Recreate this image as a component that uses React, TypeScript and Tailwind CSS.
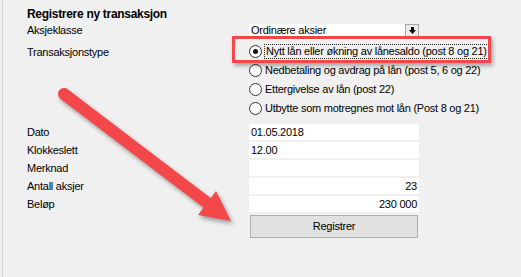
import React from 'react';

const fields = [
  { label: 'Dato', value: '01.05.2018', right: false },
  { label: 'Klokkeslett', value: '12.00', right: false },
  { label: 'Merknad', value: '', right: false },
  { label: 'Antall aksjer', value: '23', right: true },
  { label: 'Beløp', value: '230 000', right: true },
];

const options = [
  'Nytt lån eller økning av lånesaldo (post 8 og 21)',
  'Nedbetaling og avdrag på lån (post 5, 6 og 22)',
  'Ettergivelse av lån (post 22)',
  'Utbytte som motregnes mot lån (Post 8 og 21)',
];

const Radio: React.FC<{ checked?: boolean }> = ({ checked }) => (
  <span className="flex h-[13px] w-[13px] shrink-0 items-center justify-center rounded-full border border-[#333] bg-white">
    {checked && <span className="h-[5px] w-[5px] rounded-full bg-[#111]" />}
  </span>
);

const App: React.FC = () => {
  return (
    <div className="relative h-[277px] w-[521px] overflow-hidden bg-[#f0f0f0] font-['Liberation_Sans',Arial,sans-serif] text-[11px] leading-[13px] tracking-[-0.25px] text-black">
      <div className="ml-[2px] h-full border-l border-[#d2d2d2] pl-[24px] pt-[7px]">
        <div className="h-[14px] text-[12px] font-bold leading-[14px] tracking-[-0.3px]">Registrere ny transaksjon</div>

        {/* Aksjeklasse */}
        <div className="mt-[3px] grid h-[13px] grid-cols-[222px_170px] items-center">
          <div>Aksjeklasse</div>
          <div className="flex h-[13px] items-center bg-white pl-[2px]">
            <span className="flex-1">Ordinære aksier</span>
            <span className="flex h-[13px] w-[14px] items-center justify-center border border-[#a6a6a6] bg-[#ececec]">
              <svg width="7" height="7" viewBox="0 0 7 7">
                <path d="M2 0h3v3h2L3.5 7 0 3h2z" fill="#000" />
              </svg>
            </span>
          </div>
        </div>

        {/* Transaksjonstype */}
        <div className="mt-[5px] grid grid-cols-[222px_260px]">
          <div className="pt-[4px]">Transaksjonstype</div>
          <div className="flex flex-col">
            {options.map((o, i) => (
              <div key={o} className="flex h-[19px] items-center gap-[3px]">
                <Radio checked={i === 0} />
                <span className={i === 0 ? 'px-[1px] outline-1 outline-dotted outline-[#222]' : ''}>{o}</span>
              </div>
            ))}
          </div>
        </div>

        {/* Felter */}
        <div className="mt-[6px] flex flex-col gap-[2px]">
          {fields.map((f) => (
            <div key={f.label} className="grid h-[16px] grid-cols-[222px_170px] items-center">
              <div>{f.label}</div>
              <div className={`flex h-[16px] items-center bg-white px-[2px] ${f.right ? 'justify-end' : ''}`}>{f.value}</div>
            </div>
          ))}
        </div>

        <div className="mt-[3px] grid grid-cols-[223px_168px]">
          <div />
          <button className="h-[23px] border border-[#adadad] bg-[#e1e1e1] text-[11px]">Registrer</button>
        </div>
      </div>

      {/* markering */}
      <div className="absolute left-[232px] top-[36px] h-[27px] w-[259px] border-[3px] border-[#f4474a] shadow-[2px_3px_4px_rgba(0,0,0,0.3)]" />

      <svg className="absolute left-0 top-0 drop-shadow-[2px_3px_2px_rgba(0,0,0,0.35)]" width="521" height="277" viewBox="0 0 521 277">
        <line x1="64" y1="94" x2="210" y2="205" stroke="#f4474a" strokeWidth="12" strokeLinecap="round" />
        <polygon points="231,221 216,191 198,215" fill="#f4474a" />
      </svg>
    </div>
  );
};

export default App;
